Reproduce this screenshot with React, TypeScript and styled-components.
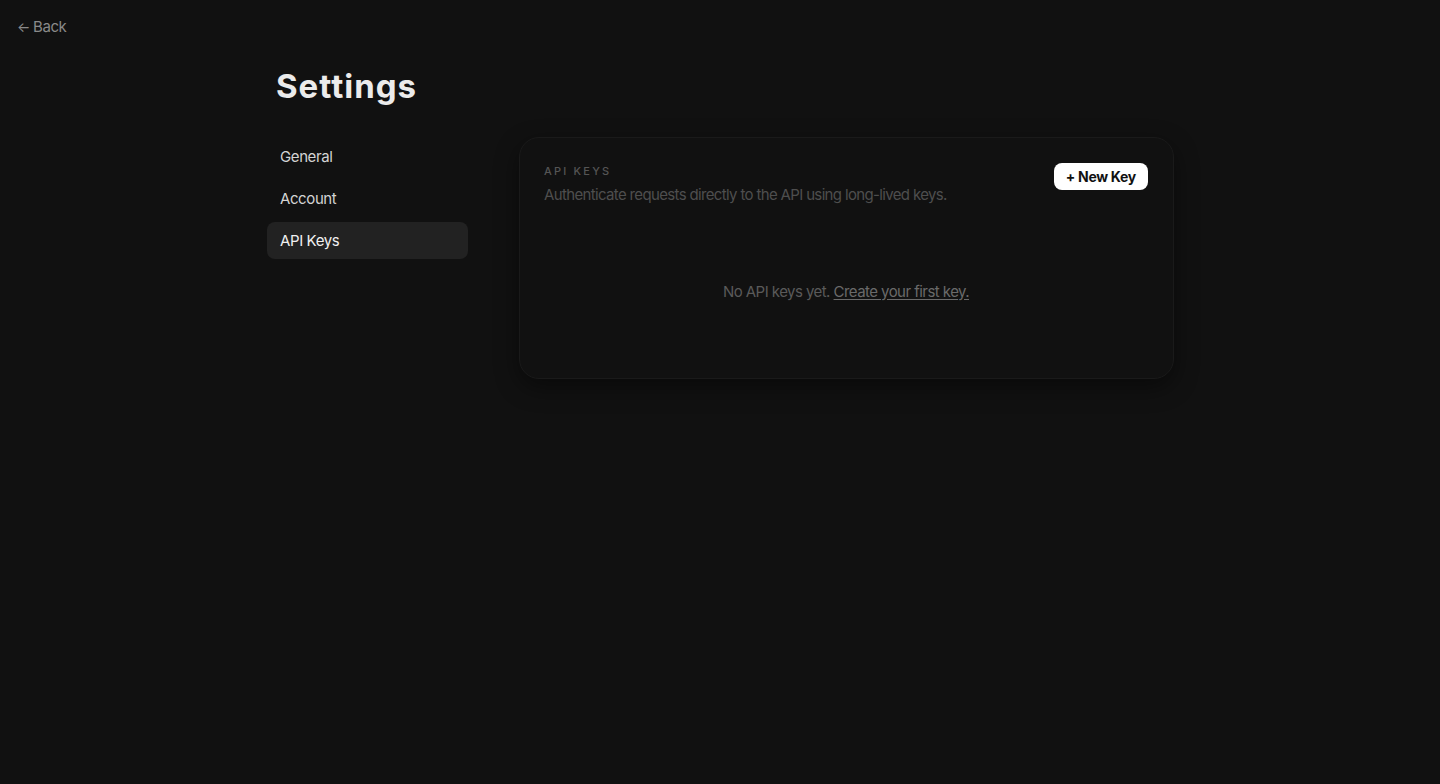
import * as React from 'react'
import styled, { createGlobalStyle } from 'styled-components'

const GlobalStyle = createGlobalStyle`
    html, body {
        margin: 0;
        padding: 0;
        background: #111111;
        font-family: Inter, 'Liberation Sans', sans-serif;
        -webkit-font-smoothing: antialiased;
    }
`

const navItems = ['General', 'Account', 'API Keys']

export default function App() {
    const [active, setActive] = React.useState('API Keys')

    return (
        <PageStyled>
            <GlobalStyle />
            <BackLinkStyled href="#">
                <span>←</span> Back
            </BackLinkStyled>
            <ContentStyled>
                <TitleStyled>Settings</TitleStyled>
                <BodyStyled>
                    <NavStyled>
                        {navItems.map((item) => (
                            <NavItemStyled
                                key={item}
                                $active={item === active}
                                onClick={() => setActive(item)}
                            >
                                {item}
                            </NavItemStyled>
                        ))}
                    </NavStyled>
                    <CardStyled>
                        <CardHeaderStyled>
                            <div>
                                <LabelStyled>API Keys</LabelStyled>
                                <DescriptionStyled>
                                    Authenticate requests directly to the API
                                    using long-lived keys.
                                </DescriptionStyled>
                            </div>
                            <NewKeyBtnStyled>+ New Key</NewKeyBtnStyled>
                        </CardHeaderStyled>
                        <EmptyStyled>
                            No API keys yet.{' '}
                            <EmptyLinkStyled href="#">
                                Create your first key.
                            </EmptyLinkStyled>
                        </EmptyStyled>
                    </CardStyled>
                </BodyStyled>
            </ContentStyled>
        </PageStyled>
    )
}

const PageStyled = styled.div`
    min-height: 784px;
    box-sizing: border-box;
    background: #111111;
    padding: 16px 17px;
`

const BackLinkStyled = styled.a`
    display: inline-flex;
    align-items: center;
    gap: 3px;
    color: #8a8a8a;
    font-size: 15px;
    letter-spacing: -0.4px;
    text-decoration: none;
    height: 20px;

    & span {
        font-size: 14px;
    }
`

const ContentStyled = styled.div`
    width: 907px;
    margin: 29px 0 0 250px;
`

const TitleStyled = styled.h1`
    margin: 0 0 31px 9px;
    font-size: 33px;
    font-weight: 700;
    letter-spacing: 1px;
    color: #ebebeb;
    line-height: 40px;
`

const BodyStyled = styled.div`
    display: flex;
    align-items: flex-start;
    gap: 51px;
`

const NavStyled = styled.nav`
    display: flex;
    flex-direction: column;
    gap: 5px;
    width: 201px;
    flex-shrink: 0;
    margin-top: 1px;
`

const NavItemStyled = styled.div<{ $active?: boolean }>`
    height: 37px;
    display: flex;
    align-items: center;
    padding: 0 13px;
    border-radius: 8px;
    font-size: 15px;
    letter-spacing: -0.4px;
    color: ${(p) => (p.$active ? '#f0f0f0' : '#d4d4d4')};
    background: ${(p) => (p.$active ? '#222222' : 'transparent')};
    cursor: pointer;
`

const CardStyled = styled.div`
    flex: 1;
    box-sizing: border-box;
    height: 242px;
    padding: 25px 25px 25px 24px;
    background: #111111;
    border: 1px solid #1a1a1a;
    border-radius: 20px;
    box-shadow: 0 8px 24px rgba(0, 0, 0, 0.45);
    display: flex;
    flex-direction: column;
`

const CardHeaderStyled = styled.div`
    display: flex;
    justify-content: space-between;
    align-items: flex-start;
`

const LabelStyled = styled.div`
    font-size: 11px;
    font-weight: 500;
    letter-spacing: 2.2px;
    text-transform: uppercase;
    color: #555555;
    line-height: 14px;
    margin-top: 1px;
`

const DescriptionStyled = styled.div`
    margin-top: 8px;
    font-size: 15px;
    letter-spacing: -0.65px;
    color: #4e4e4e;
    line-height: 18px;
`

const NewKeyBtnStyled = styled.button`
    height: 27px;
    padding: 0 12px;
    border: none;
    border-radius: 8px;
    background: #ffffff;
    color: #111111;
    font-family: inherit;
    font-size: 14px;
    font-weight: 700;
    letter-spacing: -0.3px;
    cursor: pointer;
`

const EmptyStyled = styled.div`
    margin-top: 78px;
    text-align: center;
    font-size: 15px;
    letter-spacing: -0.55px;
    color: #5a5a5a;
    line-height: 20px;
`

const EmptyLinkStyled = styled.a`
    color: #6a6a6a;
    text-decoration: underline;
    text-underline-offset: 2px;
`
